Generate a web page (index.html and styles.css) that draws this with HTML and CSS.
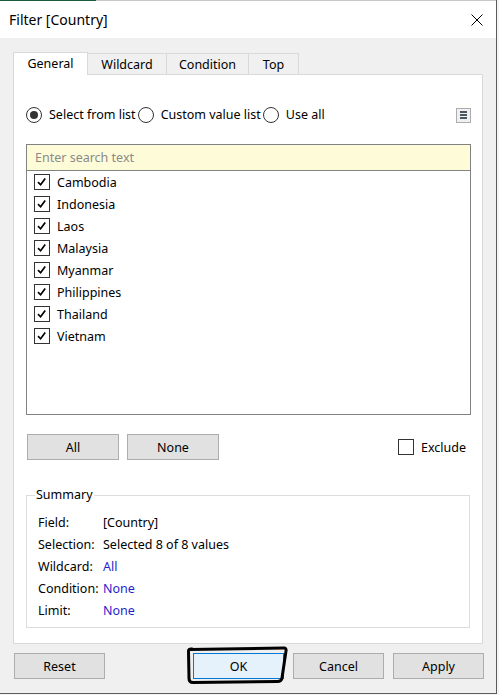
FILE: index.html
```html
<!DOCTYPE html>
<html>
<head>
<meta charset="utf-8">
<link rel="stylesheet" href="styles.css">
</head>
<body>
<div class="window">
  <div class="topline"></div>
  <div class="titlebar">
    <span class="title">Filter [Country]</span>
    <svg class="close" width="12" height="12" viewBox="0 0 12 12"><path d="M0.5 0.5 L11.5 11.5 M11.5 0.5 L0.5 11.5" stroke="#000" stroke-width="1" fill="none"/></svg>
  </div>
  <div class="client">
    <div class="tabs">
      <div class="tab active">General</div>
      <div class="tab w1">Wildcard</div>
      <div class="tab w2">Condition</div>
      <div class="tab w3">Top</div>
    </div>
    <div class="panel">
      <div class="radios">
        <span class="opt"><span class="radio on"></span>Select from list</span>
        <span class="opt"><span class="radio"></span>Custom value list</span>
        <span class="opt"><span class="radio"></span>Use all</span>
        <span class="menu-btn"><i></i><i></i><i></i></span>
      </div>
      <div class="listbox">
        <div class="search">Enter search text</div>
        <ul class="items">
          <li><span class="cb"><svg width="14" height="14" viewBox="0 0 14 14"><path d="M3 7.2 L5.6 9.8 L10.2 3.4" stroke="#000" stroke-width="1.7" fill="none"/></svg></span>Cambodia</li>
          <li><span class="cb"><svg width="14" height="14" viewBox="0 0 14 14"><path d="M3 7.2 L5.6 9.8 L10.2 3.4" stroke="#000" stroke-width="1.7" fill="none"/></svg></span>Indonesia</li>
          <li><span class="cb"><svg width="14" height="14" viewBox="0 0 14 14"><path d="M3 7.2 L5.6 9.8 L10.2 3.4" stroke="#000" stroke-width="1.7" fill="none"/></svg></span>Laos</li>
          <li><span class="cb"><svg width="14" height="14" viewBox="0 0 14 14"><path d="M3 7.2 L5.6 9.8 L10.2 3.4" stroke="#000" stroke-width="1.7" fill="none"/></svg></span>Malaysia</li>
          <li><span class="cb"><svg width="14" height="14" viewBox="0 0 14 14"><path d="M3 7.2 L5.6 9.8 L10.2 3.4" stroke="#000" stroke-width="1.7" fill="none"/></svg></span>Myanmar</li>
          <li><span class="cb"><svg width="14" height="14" viewBox="0 0 14 14"><path d="M3 7.2 L5.6 9.8 L10.2 3.4" stroke="#000" stroke-width="1.7" fill="none"/></svg></span>Philippines</li>
          <li><span class="cb"><svg width="14" height="14" viewBox="0 0 14 14"><path d="M3 7.2 L5.6 9.8 L10.2 3.4" stroke="#000" stroke-width="1.7" fill="none"/></svg></span>Thailand</li>
          <li><span class="cb"><svg width="14" height="14" viewBox="0 0 14 14"><path d="M3 7.2 L5.6 9.8 L10.2 3.4" stroke="#000" stroke-width="1.7" fill="none"/></svg></span>Vietnam</li>
        </ul>
      </div>
      <div class="actions">
        <button class="btn small">All</button>
        <button class="btn small">None</button>
        <span class="exclude"><span class="cb empty"></span>Exclude</span>
      </div>
      <fieldset class="summary">
        <legend>Summary</legend>
        <div class="srow"><span>Field:</span><span>[Country]</span></div>
        <div class="srow"><span>Selection:</span><span>Selected 8 of 8 values</span></div>
        <div class="srow"><span>Wildcard:</span><span class="link">All</span></div>
        <div class="srow"><span>Condition:</span><span class="link">None</span></div>
        <div class="srow"><span>Limit:</span><span class="link">None</span></div>
      </fieldset>
    </div>
    <div class="footer">
      <button class="btn">Reset</button>
      <span class="ok-wrap">
        <button class="btn ok">OK</button>
        <svg class="marker" width="106" height="42" viewBox="0 0 106 42"><path d="M6 4.5 L100 3 Q102.5 3 102 6 L98 33 Q97.5 36.5 93.5 36.5 L9 37.5 Q5 37.5 5 33.5 L4.5 6 Q4.5 3.5 8 4" stroke="#000" stroke-width="3" fill="none" stroke-linecap="round" stroke-linejoin="round"/></svg>
      </span>
      <button class="btn">Cancel</button>
      <button class="btn">Apply</button>
    </div>
  </div>
</div>
</body>
</html>
```

FILE: styles.css
```css
* { box-sizing: border-box; }
html, body { margin: 0; padding: 0; }
body {
  width: 499px;
  height: 695px;
  overflow: hidden;
  background: #f4f4f4;
  font-family: "Noto Sans", "DejaVu Sans", sans-serif;
  font-size: 12.5px;
  color: #000;
}
.window {
  width: 497px;
  border-right: 1px solid #5c5c5c;
  border-bottom: 1px solid #5c5c5c;
  background: #fff;
}
.topline {
  height: 1px;
  background: linear-gradient(to right, #1d5c3a 0, #1d5c3a 96px, #c8c8c8 96px);
}
.titlebar {
  height: 37px;
  display: flex;
  align-items: center;
  justify-content: space-between;
  padding: 0 13px 0 9px;
  background: #fff;
}
.title {
  font-size: 14px;
  line-height: 37px;
}
.close { display: block; }
.client {
  background: #f0f0f0;
  height: 655px;
  padding: 14px 12px 0 13px;
}
.tabs {
  display: flex;
  align-items: flex-end;
  height: 22px;
}
.tab {
  height: 21px;
  border: 1px solid #d9d9d9;
  border-bottom: none;
  border-left: none;
  background: #f0f0f0;
  display: flex;
  align-items: center;
  justify-content: center;
  padding-top: 1px;
}
.tab.active {
  width: 75px;
  height: 23px;
  margin-bottom: -1px;
  border-left: 1px solid #d9d9d9;
  background: #fff;
  position: relative;
  z-index: 1;
  padding-top: 0;
  padding-bottom: 2px;
}
.tab.w1 { width: 79px; }
.tab.w2 { width: 82px; }
.tab.w3 { width: 50px; }
.panel {
  width: 470px;
  height: 570px;
  background: #fff;
  border: 1px solid #d9d9d9;
  padding: 32px 11px 0 12px;
}
.radios {
  display: flex;
  align-items: center;
  height: 16px;
  gap: 2px;
}
.opt {
  display: flex;
  align-items: center;
  gap: 7px;
  line-height: 16px;
}
.radio {
  width: 16px;
  height: 16px;
  border: 1px solid #333;
  border-radius: 50%;
  display: flex;
  align-items: center;
  justify-content: center;
  background: #fff;
}
.radio.on::after {
  content: "";
  width: 8px;
  height: 8px;
  border-radius: 50%;
  background: #333;
}
.menu-btn {
  margin-left: auto;
  width: 15px;
  height: 15px;
  border: 1px solid #adadad;
  background: #f0f0f0;
  display: flex;
  flex-direction: column;
  align-items: center;
  justify-content: center;
  gap: 1px;
}
.menu-btn i {
  display: block;
  width: 7px;
  height: 2px;
  background: #4a5566;
}
.listbox {
  margin-top: 21px;
  height: 271px;
  border: 1px solid #828282;
}
.search {
  height: 26px;
  background: #fefcd8;
  border-bottom: 1px solid #828282;
  padding-left: 8px;
  line-height: 25px;
  color: #8a8a8a;
}
.items {
  list-style: none;
  margin: 0;
  padding: 0 0 0 7px;
}
.items li {
  height: 22px;
  display: flex;
  align-items: center;
  gap: 7px;
}
.cb {
  width: 16px;
  height: 16px;
  border: 1px solid #333;
  background: #fff;
  display: flex;
  align-items: center;
  justify-content: center;
}
.cb svg { display: block; }
.actions {
  margin-top: 19px;
  height: 26px;
  display: flex;
  align-items: center;
  gap: 8px;
  padding-left: 1px;
}
.btn {
  font-family: inherit;
  font-size: 12.5px;
  color: #000;
  width: 91px;
  height: 26px;
  background: #e1e1e1;
  border: 1px solid #adadad;
  padding: 0;
  margin: 0;
}
.btn.small { width: 92px; }
.exclude {
  margin-left: auto;
  margin-right: 5px;
  display: flex;
  align-items: center;
  gap: 7px;
}
.summary {
  margin: 27px 0 0 0;
  width: 444px;
  border: 1px solid #dcdcdc;
  padding: 9px 0 5px 8px;
}
.summary legend {
  padding: 0 1px;
  line-height: 16px;
}
.srow {
  display: grid;
  grid-template-columns: 65px 1fr;
  line-height: 22px;
  padding-left: 3px;
}
.link { color: #1f1fcc; }
.footer {
  margin-top: 9px;
  display: flex;
  align-items: center;
  padding-left: 1px;
  gap: 9px;
}
.ok-wrap {
  margin-left: auto;
  position: relative;
  display: block;
  height: 26px;
}
.btn.ok {
  background: #e5f1fb;
  border-color: #0078d7;
}
.marker {
  position: absolute;
  left: -9px;
  top: -8px;
  pointer-events: none;
}
```
